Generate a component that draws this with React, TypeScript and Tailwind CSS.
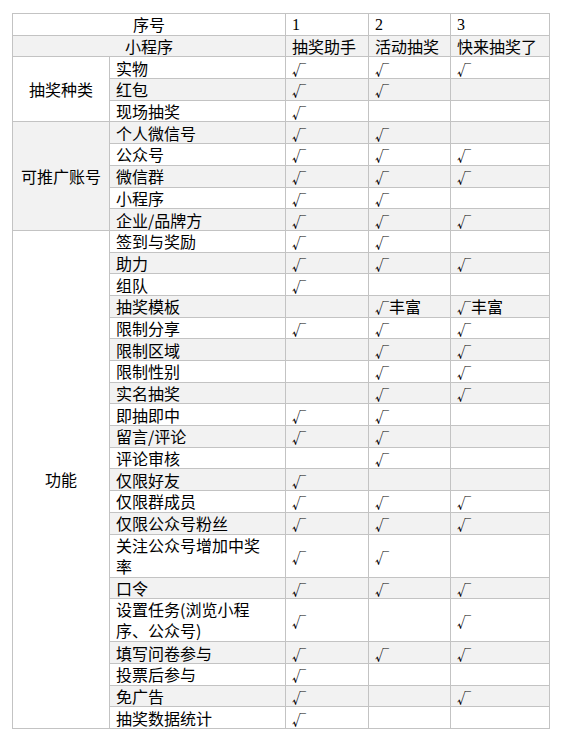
import React from 'react';

type Row = {
  group?: { label: string; span: number };
  head?: string;
  name?: React.ReactNode;
  cells: React.ReactNode[];
  tall?: boolean;
};

const Check = () => <span className="text-[14px] leading-none">√</span>;
const Y = <Check />;
const Rich = (
  <>
    <Check />丰富
  </>
);

const rows: Row[] = [
  { head: '序号', cells: [<span className="font-['Liberation_Serif']">1</span>, <span className="font-['Liberation_Serif']">2</span>, <span className="font-['Liberation_Serif']">3</span>] },
  { head: '小程序', cells: ['抽奖助手', '活动抽奖', '快来抽奖了'] },
  { group: { label: '抽奖种类', span: 3 }, name: '实物', cells: [Y, Y, Y] },
  { name: '红包', cells: [Y, Y, ''] },
  { name: '现场抽奖', cells: [Y, '', ''] },
  { group: { label: '可推广账号', span: 5 }, name: '个人微信号', cells: [Y, Y, ''] },
  { name: '公众号', cells: [Y, Y, Y] },
  { name: '微信群', cells: [Y, Y, Y] },
  { name: '小程序', cells: [Y, Y, ''] },
  { name: '企业/品牌方', cells: [Y, Y, Y] },
  { group: { label: '功能', span: 21 }, name: '签到与奖励', cells: [Y, Y, ''] },
  { name: '助力', cells: [Y, Y, Y] },
  { name: '组队', cells: [Y, '', ''] },
  { name: '抽奖模板', cells: ['', Rich, Rich] },
  { name: '限制分享', cells: [Y, Y, Y] },
  { name: '限制区域', cells: ['', Y, Y] },
  { name: '限制性别', cells: ['', Y, Y] },
  { name: '实名抽奖', cells: ['', Y, Y] },
  { name: '即抽即中', cells: [Y, Y, ''] },
  { name: '留言/评论', cells: [Y, Y, ''] },
  { name: '评论审核', cells: ['', Y, ''] },
  { name: '仅限好友', cells: [Y, '', ''] },
  { name: '仅限群成员', cells: [Y, Y, Y] },
  { name: '仅限公众号粉丝', cells: [Y, Y, Y] },
  { name: <>关注公众号增加中奖<br />率</>, cells: [Y, Y, ''], tall: true },
  { name: '口令', cells: [Y, Y, Y] },
  { name: <>设置任务(浏览小程<br />序、公众号)</>, cells: [Y, '', Y], tall: true },
  { name: '填写问卷参与', cells: [Y, Y, Y] },
  { name: '投票后参与', cells: [Y, '', ''] },
  { name: '免广告', cells: [Y, '', Y] },
  { name: '抽奖数据统计', cells: [Y, '', ''] },
];

const cell = 'border border-[#c3c3c3] px-[6px] py-0 align-middle';

export default function App() {
  return (
    <div className="min-h-[734px] bg-white pl-[12px] pt-[13px] font-['Noto_Sans_CJK_SC',sans-serif] text-[16px] leading-[16px] text-black">
      <table className="w-[537px] table-fixed border-collapse">
        <colgroup>
          <col className="w-[97px]" />
          <col className="w-[176px]" />
          <col className="w-[83px]" />
          <col className="w-[82px]" />
          <col className="w-[99px]" />
        </colgroup>
        <tbody>
          {rows.map((r, i) => (
            <tr key={i} className={i % 2 === 1 ? 'bg-[#f2f2f2]' : 'bg-white'}>
              {r.head ? (
                <td colSpan={2} className={`${cell} h-[21.7px] text-center`}>
                  {r.head}
                </td>
              ) : (
                <>
                  {r.group && (
                    <td rowSpan={r.group.span} className={`${cell} text-center`}>
                      {r.group.label}
                    </td>
                  )}
                  <td
                    className={`${cell} ${
                      r.tall ? 'h-[43px] leading-[21px]' : 'h-[21.7px]'
                    } whitespace-nowrap`}
                  >
                    {r.name}
                  </td>
                </>
              )}
              {r.cells.map((c, j) => (
                <td key={j} className={`${cell} whitespace-nowrap`}>
                  {c}
                </td>
              ))}
            </tr>
          ))}
        </tbody>
      </table>
    </div>
  );
}
